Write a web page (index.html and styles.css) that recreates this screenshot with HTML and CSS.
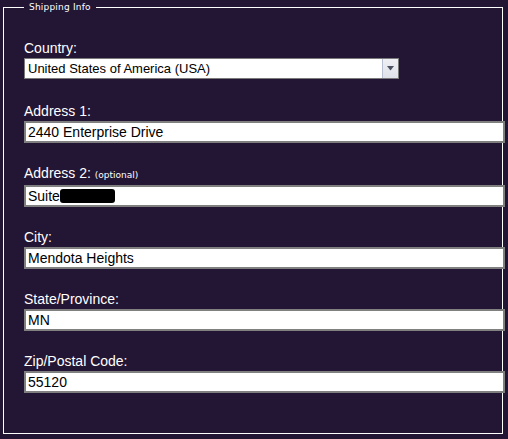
FILE: index.html
```html
<!DOCTYPE html>
<html>
<head>
<meta charset="utf-8">
<link rel="stylesheet" href="styles.css">
</head>
<body>
<fieldset class="shipping">
  <legend class="legend">Shipping Info</legend>
  <div class="field field-select">
    <label class="label">Country:</label>
    <div class="select-wrap">
      <select class="select"><option>United States of America (USA)</option></select>
      <span class="select-btn"><svg class="arrow" width="7" height="5" viewBox="0 0 7 5"><polygon points="0,0 7,0 3.5,4.5" fill="#4d5260"/></svg></span>
    </div>
  </div>
  <div class="field">
    <label class="label">Address 1:</label>
    <input class="input" type="text" value="2440 Enterprise Drive">
  </div>
  <div class="field">
    <label class="label">Address 2: <span class="optional">(optional)</span></label>
    <div class="input-wrap">
      <input class="input" type="text" value="Suite">
      <span class="redact"></span>
    </div>
  </div>
  <div class="field">
    <label class="label">City:</label>
    <input class="input" type="text" value="Mendota Heights">
  </div>
  <div class="field">
    <label class="label">State/Province:</label>
    <input class="input" type="text" value="MN">
  </div>
  <div class="field">
    <label class="label">Zip/Postal Code:</label>
    <input class="input" type="text" value="55120">
  </div>
</fieldset>
</body>
</html>
```
FILE: styles.css
```css
html, body {
  margin: 0;
  padding: 0;
  background: #231534;
}
body {
  font-family: "Liberation Sans", Arial, sans-serif;
  height: 439px;
  overflow: hidden;
}
.shipping {
  box-sizing: border-box;
  width: 500px;
  min-width: 0;
  margin: 1px 0 0 3px;
  padding: 27px 0 40px 20px;
  border: 1px solid #ffffff;
}
.legend {
  font-family: "DejaVu Sans", Verdana, sans-serif;
  font-size: 9px;
  line-height: 12px;
  letter-spacing: 0.2px;
  color: #ffffff;
  padding: 0 5px;
}
.field {
  margin-bottom: 22px;
}
.field:last-child {
  margin-bottom: 0;
}
.field-select {
  margin-bottom: 24px;
}
.label {
  display: block;
  font-size: 14px;
  line-height: 16px;
  color: #ffffff;
  margin-bottom: 2px;
}
.optional {
  font-family: "DejaVu Sans", Verdana, sans-serif;
  font-size: 9px;
}
.input {
  display: block;
  box-sizing: border-box;
  width: 481px;
  height: 22px;
  margin: 0;
  padding: 0 2px;
  border: 2px solid #808080;
  background: #ffffff;
  color: #000000;
  font-family: "Liberation Sans", Arial, sans-serif;
  font-size: 14px;
  outline: none;
}
.input-wrap {
  position: relative;
}
.redact {
  position: absolute;
  left: 36px;
  top: 4px;
  width: 55px;
  height: 14px;
  background: #000000;
  border-radius: 3px;
}
.select-wrap {
  position: relative;
  width: 375px;
}
.select {
  display: block;
  box-sizing: border-box;
  width: 375px;
  height: 21px;
  margin: 0;
  padding: 0 3px;
  border: 1px solid #7a7a7a;
  border-radius: 0;
  background: #ffffff;
  color: #000000;
  font-family: "Liberation Sans", Arial, sans-serif;
  font-size: 13px;
  -webkit-appearance: none;
  appearance: none;
  outline: none;
}
.select-btn {
  position: absolute;
  top: 1px;
  right: 1px;
  bottom: 1px;
  width: 15px;
  border-left: 1px solid #b7c0d0;
  background: linear-gradient(#eef0f4, #dfe2e8);
  display: flex;
  align-items: center;
  justify-content: center;
}
.arrow {
  display: block;
}
```
